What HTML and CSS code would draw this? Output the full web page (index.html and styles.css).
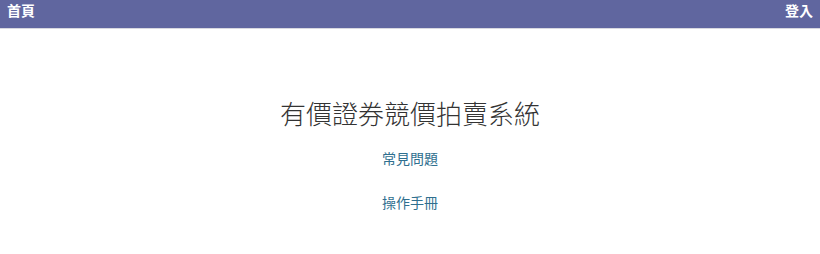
FILE: index.html
```html
<!DOCTYPE html>
<html lang="zh-Hant">
<head>
<meta charset="utf-8">
<title>有價證券競價拍賣系統</title>
<link rel="stylesheet" href="styles.css">
</head>
<body>
<header class="topbar">
  <a class="nav-link" href="#">首頁</a>
  <a class="nav-link" href="#">登入</a>
</header>
<main class="content">
  <h1 class="title">有價證券競價拍賣系統</h1>
  <a class="link" href="#">常見問題</a>
  <a class="link" href="#">操作手冊</a>
</main>
</body>
</html>
```
FILE: styles.css
```css
html, body {
  margin: 0;
  padding: 0;
  background: #ffffff;
  font-family: "Noto Sans CJK TC", "Liberation Sans", sans-serif;
}
.topbar {
  height: 28px;
  background: #60669f;
  border-bottom: 1px solid #d8d8e0;
  display: flex;
  justify-content: space-between;
  align-items: center;
  padding: 0 7px;
}
.nav-link {
  color: #ffffff;
  font-size: 14px;
  font-weight: 700;
  text-decoration: none;
  line-height: 1;
  margin-top: -8px;
}
.content {
  display: flex;
  flex-direction: column;
  align-items: center;
}
.title {
  margin: 69px 0 0;
  font-size: 26px;
  font-weight: 300;
  line-height: 30px;
  color: #333333;
  letter-spacing: 0;
}
.link {
  margin-top: 20px;
  font-size: 14px;
  line-height: 20px;
  color: #2f6f8f;
  text-decoration: none;
}
.link + .link {
  margin-top: 24px;
}
```
